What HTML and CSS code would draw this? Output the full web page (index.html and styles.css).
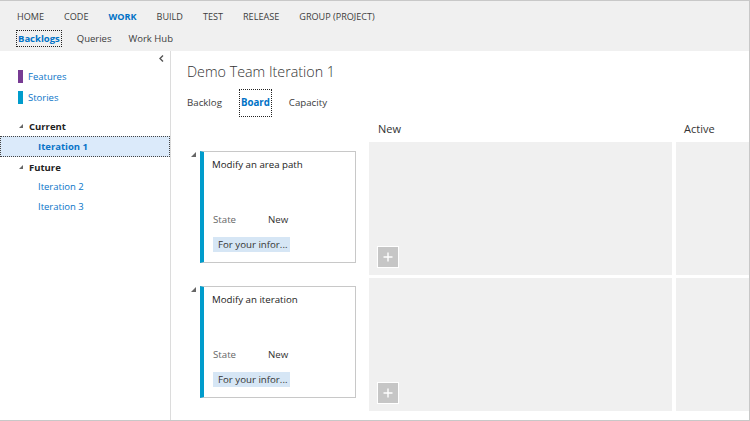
FILE: index.html
```html
<!DOCTYPE html>
<html>
<head>
<meta charset="utf-8">
<link rel="stylesheet" href="styles.css">
</head>
<body>
<div class="frame">
  <header class="hub">
    <nav class="top-nav">
      <span class="top-item">HOME</span>
      <span class="top-item">CODE</span>
      <span class="top-item active">WORK</span>
      <span class="top-item">BUILD</span>
      <span class="top-item">TEST</span>
      <span class="top-item">RELEASE</span>
      <span class="top-item">GROUP (PROJECT)</span>
    </nav>
    <nav class="sub-nav">
      <span class="sub-item active">Backlogs</span>
      <span class="sub-item">Queries</span>
      <span class="sub-item">Work Hub</span>
    </nav>
  </header>
  <div class="content">
    <aside class="side">
      <div class="collapse-row">
        <svg class="chevron" width="5" height="7" viewBox="0 0 5 7"><polyline points="4,0.5 1,3.5 4,6.5" fill="none" stroke="#555" stroke-width="1.4"/></svg>
      </div>
      <ul class="levels">
        <li class="level"><span class="swatch purple"></span><span class="link">Features</span></li>
        <li class="level"><span class="swatch blue"></span><span class="link">Stories</span></li>
      </ul>
      <ul class="tree">
        <li class="group"><span class="tri"></span>Current</li>
        <li class="iter selected">Iteration 1</li>
        <li class="group"><span class="tri"></span>Future</li>
        <li class="iter">Iteration 2</li>
        <li class="iter">Iteration 3</li>
      </ul>
    </aside>
    <main class="main">
      <h1 class="title">Demo Team Iteration 1</h1>
      <div class="tabs">
        <span class="tab">Backlog</span>
        <span class="tab active">Board</span>
        <span class="tab">Capacity</span>
      </div>
      <div class="board">
        <div class="col-head"></div>
        <div class="col-head">New</div>
        <div class="col-head active-head">Active</div>

        <div class="lane-cards first">
          <span class="lane-tri"></span>
          <div class="card">
            <div class="card-title">Modify an area path</div>
            <div class="card-field"><span class="field-label">State</span><span class="field-value">New</span></div>
            <div class="card-tags"><span class="tag">For your infor...</span></div>
          </div>
        </div>
        <div class="cell">
          <span class="add-btn"><svg width="10" height="10" viewBox="0 0 10 10"><path d="M5 0.5V9.5M0.5 5H9.5" stroke="#fff" stroke-width="1.4"/></svg></span>
        </div>
        <div class="cell"></div>

        <div class="lane-cards">
          <span class="lane-tri"></span>
          <div class="card">
            <div class="card-title">Modify an iteration</div>
            <div class="card-field"><span class="field-label">State</span><span class="field-value">New</span></div>
            <div class="card-tags"><span class="tag">For your infor...</span></div>
          </div>
        </div>
        <div class="cell">
          <span class="add-btn"><svg width="10" height="10" viewBox="0 0 10 10"><path d="M5 0.5V9.5M0.5 5H9.5" stroke="#fff" stroke-width="1.4"/></svg></span>
        </div>
        <div class="cell"></div>
      </div>
    </main>
  </div>
</div>
</body>
</html>
```

FILE: styles.css
```css
* { box-sizing: border-box; }
html, body { margin: 0; padding: 0; background: #fff; }
body { font-family: "Open Sans", "Noto Sans", sans-serif; color: #333; }

.frame {
  width: 750px;
  height: 421px;
  border-top: 1px solid #c8c8c8;
  border-right: 1px solid #c8c8c8;
  border-bottom: 1px solid #c8c8c8;
  display: flex;
  flex-direction: column;
  overflow: hidden;
  background: #fff;
}

.hub {
  height: 50px;
  flex: none;
  background: #f0f0f0;
}
.top-nav {
  display: flex;
  gap: 20px;
  padding: 6px 0 0 17px;
  height: 26px;
  line-height: 20px;
  font-size: 9.1px;
  color: #3c3c3c;
}
.top-item.active { color: #0072c6; font-weight: 700; }

.sub-nav {
  display: flex;
  gap: 13px;
  padding-left: 16px;
  margin-top: 3px;
  font-size: 9.5px;
  color: #3c3c3c;
}
.sub-item {
  border: 1px dotted transparent;
  padding: 0 1px;
  line-height: 15px;
}
.sub-item.active {
  border-color: #222;
  color: #0072c6;
  font-weight: 700;
}

.content {
  flex: 1;
  display: flex;
  min-height: 0;
}

.side {
  width: 171px;
  flex: none;
  border-right: 1px solid #dcdcdc;
  font-size: 9.5px;
}
.collapse-row {
  height: 15px;
  display: flex;
  justify-content: flex-end;
  align-items: flex-start;
  padding: 4px 6px 0 0;
}
.levels, .tree { list-style: none; margin: 0; padding: 0; }
.level {
  display: flex;
  align-items: center;
  height: 21px;
  padding-left: 18px;
}
.swatch { width: 5px; height: 13px; margin-right: 5px; }
.swatch.purple { background: #773b93; }
.swatch.blue { background: #009ccc; }
.link { color: #0a74c8; }

.tree { margin-top: 8px; }
.group {
  display: flex;
  align-items: center;
  height: 20px;
  padding-left: 19px;
  font-weight: 700;
  color: #222;
}
.tri {
  width: 0;
  height: 0;
  border-left: 4px solid transparent;
  border-bottom: 4px solid #666;
  margin-right: 6px;
}
.iter {
  height: 20px;
  line-height: 20px;
  padding-left: 38px;
  color: #0a74c8;
}
.iter.selected {
  height: 21px;
  line-height: 19px;
  background: #dbeafa;
  border: 1px dotted #444;
  padding-left: 37px;
  font-weight: 700;
}

.main {
  flex: 1;
  min-width: 0;
  display: flex;
  flex-direction: column;
}
.title {
  margin: 0;
  padding: 9px 0 0 16px;
  font-size: 14.3px;
  font-weight: 300;
  line-height: 24px;
  color: #333;
}
.tabs {
  display: flex;
  gap: 15px;
  margin-top: 5px;
  padding-left: 14px;
  font-size: 9.7px;
  color: #3c3c3c;
}
.tab {
  border: 1px dotted transparent;
  padding: 0 1px;
  line-height: 26px;
}
.tab.active {
  border-color: #222;
  color: #0072c6;
  font-weight: 700;
}

.board {
  display: grid;
  grid-template-columns: 194px 303px 1fr;
  grid-template-rows: 22px 133px 133px;
  column-gap: 4px;
  row-gap: 3px;
}
.col-head {
  font-size: 11px;
  line-height: 22px;
  padding: 1px 0 0 9px;
  color: #333;
}
.active-head { padding-left: 8px; }

.lane-cards {
  display: flex;
  align-items: flex-start;
  padding: 8px 0 0 20px;
  gap: 4px;
}
.lane-cards.first { padding-top: 9px; }
.lane-tri {
  width: 0;
  height: 0;
  margin-top: 1px;
  border-left: 5px solid transparent;
  border-bottom: 5px solid #666;
}
.card {
  width: 156px;
  height: 112px;
  border: 1px solid #c8c8c8;
  border-left: 4px solid #009ccc;
  background: #fff;
  display: flex;
  flex-direction: column;
  padding: 6px 8px 10px 8px;
  font-size: 9.7px;
  color: #222;
}
.card-title { line-height: 14px; flex: 1; }
.card-field {
  display: flex;
  line-height: 14px;
  padding-left: 1px;
  margin-bottom: 10px;
}
.field-label { width: 55px; color: #666; }
.field-value { color: #333; }
.card-tags { display: flex; padding-left: 1px; }
.tag {
  background: #d6e6f5;
  line-height: 15px;
  padding: 0 3px 0 5px;
  color: #333;
}

.cell {
  background: #f0f0f0;
  display: flex;
  flex-direction: column;
  justify-content: flex-end;
  align-items: flex-start;
  padding: 0 0 7px 8px;
}
.add-btn {
  width: 22px;
  height: 22px;
  border: 1px solid #fff;
  background: #c6c6c6;
  display: flex;
  align-items: center;
  justify-content: center;
}
```
